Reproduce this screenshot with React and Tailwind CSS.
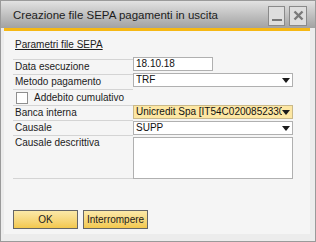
import React from "react";

const font = { fontFamily: '"Liberation Sans", Arial, sans-serif' };

const Arrow = () => (
    <svg width="8" height="5" viewBox="0 0 8 5" className="shrink-0">
        <path d="M0 0H8L4 5Z" fill="#1a1a1a" />
    </svg>
);

const Select = ({ value, className = "", yellow = false }) => (
    <div
        className={`w-[160px] h-[14px] flex items-center pl-[2px] pr-[2px] border ${
            yellow ? "bg-[#fde7a3] border-[#c9b98a]" : "bg-white border-[#b0b0b0]"
        } ${className}`}
    >
        <span className="flex-1 min-w-0 overflow-hidden whitespace-nowrap leading-[12px] text-[#111]">
            {value}
        </span>
        <Arrow />
    </div>
);

const Label = ({ children, className = "" }) => (
    <div
        className={`w-[120px] shrink-0 pl-[2px] border-b border-[#d4d4d4] text-[#1b1b1b] ${className}`}
    >
        {children}
    </div>
);

const App = () => {
    return (
        <div
            className="w-[316px] h-[242px] flex flex-col bg-[#ececec] border border-[#9a9a9a] text-[10px]"
            style={font}
        >
            {/* Title bar */}
            <div className="h-[27px] shrink-0 flex items-center justify-between pl-[12px] pr-[8px] bg-gradient-to-b from-[#e2e2e2] to-[#a2a2a2]">
                <span className="text-[11.5px] text-[#1c1c1c] leading-none mt-[2px]">
                    Creazione file SEPA pagamenti in uscita
                </span>
                <div className="flex gap-[4px] mt-[2px]">
                    <div className="w-[17px] h-[20px] border border-[#8a8a8a] bg-[#dedede] flex items-end justify-center pb-[4px]">
                        <div className="w-[10px] h-[2px] bg-[#777]" />
                    </div>
                    <div className="w-[18px] h-[20px] border border-[#8a8a8a] bg-[#dedede] flex items-center justify-center">
                        <svg width="11" height="11" viewBox="0 0 11 11">
                            <path d="M1.5 1.5L9.5 9.5M9.5 1.5L1.5 9.5" stroke="#7a7a7a" strokeWidth="2.4" />
                        </svg>
                    </div>
                </div>
            </div>

            {/* Body */}
            <div className="flex-1 ml-[3px] mr-[5px] mb-[7px] border-t-[3px] border-[#f6b814] bg-[#f5f5f5] pl-[9px] pt-[8px] flex flex-col">
                <div className="h-[12px] leading-[12px] pl-[2px] text-[#1b1b1b] underline underline-offset-[1px]">
                    Parametri file SEPA
                </div>

                <div className="mt-[8px] flex flex-col">
                    <div className="flex items-start">
                        <Label className="border-t h-[16px] leading-[14px]">Data esecuzione</Label>
                        <div className="-mt-[2px] w-[80px] h-[14px] bg-white border border-[#b0b0b0] pl-[2px] leading-[12px] text-[#111]">
                            18.10.18
                        </div>
                    </div>
                    <div className="flex items-start">
                        <Label className="h-[15px] leading-[14px]">Metodo pagamento</Label>
                        <Select value="TRF" className="-mt-[2px]" />
                    </div>
                    <div className="h-[15px] flex items-center pl-[3px]">
                        <div className="w-[12px] h-[12px] bg-white border border-[#8f8f8f]" />
                        <span className="ml-[6px] text-[#1b1b1b]">Addebito cumulativo</span>
                    </div>
                    <div className="flex items-start">
                        <Label className="border-t h-[16px] leading-[14px]">Banca interna</Label>
                        <Select value="Unicredit Spa [IT54C0200852330000" yellow />
                    </div>
                    <div className="flex items-start">
                        <Label className="h-[15px] leading-[14px]">Causale</Label>
                        <Select value="SUPP" />
                    </div>
                    <div className="flex items-start">
                        <Label className="h-[43px] leading-[14px]">Causale descrittiva</Label>
                        <div className="mt-[1px] w-[160px] h-[42px] bg-white border border-[#b0b0b0]" />
                    </div>
                </div>

                <div className="mt-[31px] flex gap-[5px]">
                    <button className="w-[65px] h-[19px] border border-[#666] bg-gradient-to-b from-[#fbe9a8] to-[#f3c84c] text-[10px] text-[#1b1b1b] leading-none">
                        OK
                    </button>
                    <button className="w-[65px] h-[19px] border border-[#666] bg-gradient-to-b from-[#fbe9a8] to-[#f3c84c] text-[10px] text-[#1b1b1b] leading-none">
                        Interrompere
                    </button>
                </div>
            </div>
        </div>
    );
};

export default App;
